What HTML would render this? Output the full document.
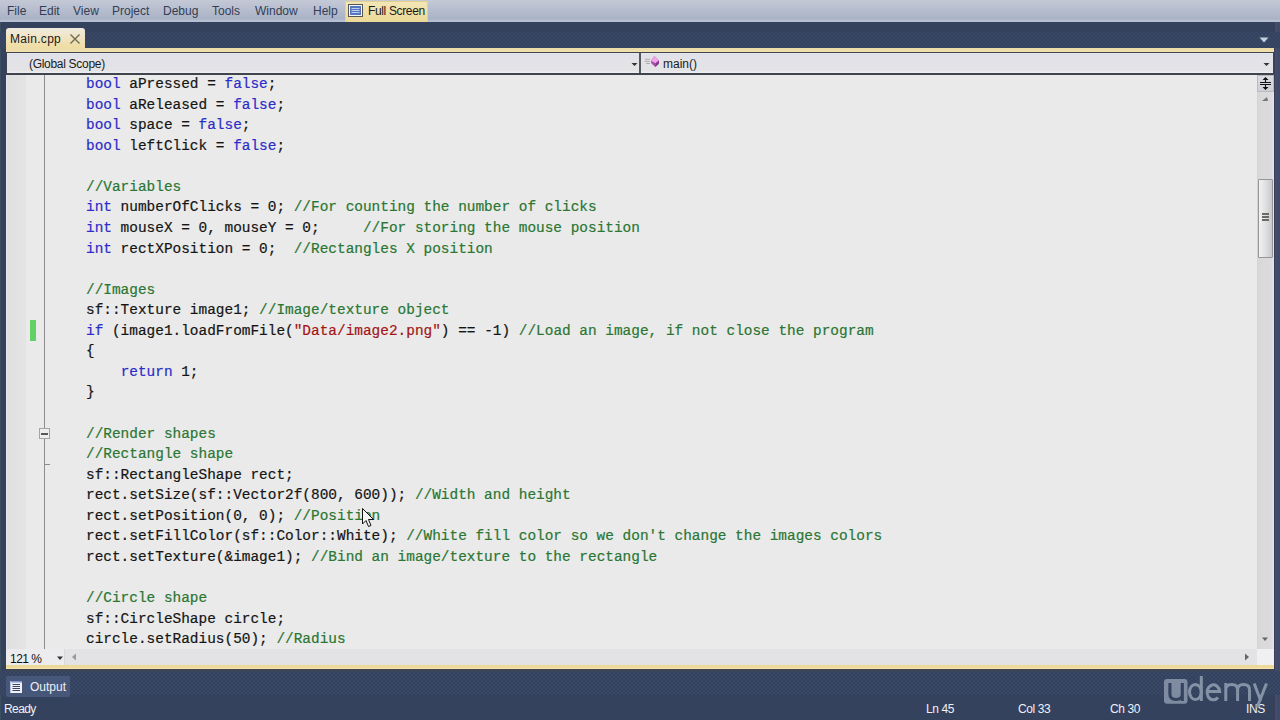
<!DOCTYPE html>
<html><head><meta charset="utf-8">
<style>
*{margin:0;padding:0;box-sizing:border-box}
html,body{width:1280px;height:720px;overflow:hidden}
body{position:relative;background:#34425e;font-family:"Liberation Sans",sans-serif;}
.abs{position:absolute}
#menubar{left:0;top:0;width:1280px;height:22px;background:linear-gradient(#c4c9d6 0,#aab2c6 19px,#b6bed2 20.5px,#b6bed2 22px);}
.mi{position:absolute;top:4px;font-size:12px;color:#323e56;line-height:14px;white-space:nowrap}
#fs{left:345px;top:1px;width:83px;height:21px;background:linear-gradient(#f3e6b6,#ecd998);border:1px solid #e6d08a;border-bottom:none}
#tabband{left:0;top:22px;width:1280px;height:30px;background:#34425e}
#tab{left:6px;top:28px;width:79px;height:20px;border-radius:3px 3px 0 0;background:linear-gradient(#f0ebdf,#efdca2)}
#yband{left:6px;top:48px;width:1268px;height:4px;background:linear-gradient(#eddca6,#efdfab)}
#frame{left:6px;top:52px;width:1268px;height:619px;background:#40444e}
#scope{left:7px;top:53px;width:1266px;height:20px;background:linear-gradient(#ebebf2 0,#e1e1e9 1px,#e4e4e6 18px,#ededf0 19px)}
#code{left:6px;top:75px;width:1251px;height:574px;background:#eaeaea;overflow:hidden}
#gut1{left:6px;top:75px;width:20px;height:574px;background:linear-gradient(90deg,#e4e8ee 0,#e4e8ee 1px,#dfe0e0 1px,#e4e4e5 20px)}
#outl{left:44px;top:75px;width:1px;height:574px;background:#8c8c8c}
pre{position:absolute;left:86px;top:74px;font-family:"Liberation Mono",monospace;font-size:14.43px;line-height:20.556px;color:#151515;white-space:pre;-webkit-text-stroke:0.2px currentColor}
.k{color:#2c2cc8}.c{color:#2a7632}.s{color:#a31515}
#vsb{left:1257px;top:75px;width:17px;height:574px;background:linear-gradient(90deg,#cfcfd0 0,#d8d8d9 1px,#dcdadd 14px,#e2e2ea 16px)}
#hsb{left:6px;top:649px;width:1268px;height:16px;background:#e3e3e5}
#yband2{left:6px;top:665px;width:1268px;height:4px;background:linear-gradient(#ecd996,#eedb9c 70%,#f5ebc2)}
.dith{position:absolute;background:#33415f;background-image:radial-gradient(#3a4966 30%,transparent 40%),radial-gradient(#3a4966 30%,transparent 40%);background-size:4px 4px;background-position:0 0,2px 2px}
.st{position:absolute;top:702px;font-size:12px;color:#eef1f6;line-height:14px;white-space:nowrap;letter-spacing:-0.4px}
</style></head><body>
<div class="abs" style="left:0;top:22px;width:1px;height:698px;background:#3a5060"></div>
<div class="abs" style="left:1274px;top:22px;width:6px;height:698px;background:linear-gradient(90deg,#3a3e58 0,#3a3e58 1px,#464c6e 1px,#444c6e 3px,#3e4a6a 4px,#3a5064 6px)"></div>
<div id="menubar" class="abs">
  <span class="mi" style="left:7px">File</span>
  <span class="mi" style="left:39px">Edit</span>
  <span class="mi" style="left:73px">View</span>
  <span class="mi" style="left:112px">Project</span>
  <span class="mi" style="left:163px">Debug</span>
  <span class="mi" style="left:212px">Tools</span>
  <span class="mi" style="left:255px">Window</span>
  <span class="mi" style="left:313px">Help</span>
</div>
<div class="dith" style="left:0;top:32px;width:1280px;height:16px"></div>
<div class="dith" style="left:0;top:671px;width:1280px;height:24px"></div>
<div id="fs" class="abs"></div>
<span class="mi" style="left:368px;color:#1a1a1a;letter-spacing:-0.35px">Full Screen</span>
<div id="tab" class="abs"></div>
<span class="abs" style="left:10px;top:32px;font-size:12px;line-height:14px;color:#1a1a1a;letter-spacing:0.3px">Main.cpp</span>
<div id="yband" class="abs"></div>
<div id="frame" class="abs"></div>
<div id="scope" class="abs"></div>
<span class="abs" style="left:29px;top:57px;font-size:12px;line-height:14px;color:#1a1a1a;letter-spacing:-0.3px">(Global Scope)</span>
<span class="abs" style="left:663px;top:57px;font-size:12px;line-height:14px;color:#1a1a1a">main()</span>
<div id="code" class="abs"></div>
<div id="gut1" class="abs"></div>
<div id="outl" class="abs"></div>
<pre><span class="k">bool</span> aPressed = <span class="k">false</span>;
<span class="k">bool</span> aReleased = <span class="k">false</span>;
<span class="k">bool</span> space = <span class="k">false</span>;
<span class="k">bool</span> leftClick = <span class="k">false</span>;

<span class="c">//Variables</span>
<span class="k">int</span> numberOfClicks = 0; <span class="c">//For counting the number of clicks</span>
<span class="k">int</span> mouseX = 0, mouseY = 0;     <span class="c">//For storing the mouse position</span>
<span class="k">int</span> rectXPosition = 0;  <span class="c">//Rectangles X position</span>

<span class="c">//Images</span>
sf::Texture image1; <span class="c">//Image/texture object</span>
<span class="k">if</span> (image1.loadFromFile(<span class="s">"Data/image2.png"</span>) == -1) <span class="c">//Load an image, if not close the program</span>
{
    <span class="k">return</span> 1;
}

<span class="c">//Render shapes</span>
<span class="c">//Rectangle shape</span>
sf::RectangleShape rect;
rect.setSize(sf::Vector2f(800, 600)); <span class="c">//Width and height</span>
rect.setPosition(0, 0); <span class="c">//Position</span>
rect.setFillColor(sf::Color::White); <span class="c">//White fill color so we don't change the images colors</span>
rect.setTexture(&amp;image1); <span class="c">//Bind an image/texture to the rectangle</span>

<span class="c">//Circle shape</span>
sf::CircleShape circle;
circle.setRadius(50); <span class="c">//Radius</span>
</pre>
<div id="vsb" class="abs"></div>
<!-- split button -->
<div class="abs" style="left:1257px;top:75px;width:17px;height:17px;background:linear-gradient(#dcdde2,#cfd1d6);border:1px solid #b8bac0"></div>
<svg class="abs" style="left:1257px;top:75px" width="17" height="17" viewBox="0 0 17 17">
 <path d="M3 7.5H14M3 9.5H14" stroke="#111" stroke-width="1.1"/>
 <path d="M8.5 2L5.5 5H11.5Z M8.5 15L5.5 12H11.5Z" fill="#111"/>
 <path d="M8.5 4V7M8.5 10V13" stroke="#111" stroke-width="1.1"/>
</svg>
<svg class="abs" style="left:1261px;top:96px" width="8" height="6" viewBox="0 0 8 6"><path d="M1 5H7L6 1Z" fill="#777"/></svg>
<!-- thumb -->
<div class="abs" style="left:1258px;top:179px;width:15px;height:79px;border:1px solid #959595;border-radius:1px;background:linear-gradient(90deg,#f2f2f3,#e0e0e2 50%,#c9c9cc)"></div>
<div class="abs" style="left:1262px;top:213px;width:7px;height:2px;background:#6a6a6a"></div>
<div class="abs" style="left:1262px;top:216px;width:7px;height:2px;background:#6a6a6a"></div>
<div class="abs" style="left:1262px;top:219px;width:7px;height:2px;background:#6a6a6a"></div>
<svg class="abs" style="left:1261px;top:637px" width="8" height="6" viewBox="0 0 8 6"><path d="M1 0.5H7L4 4Z" fill="#666"/></svg>

<div id="hsb" class="abs"></div>
<div class="abs" style="left:6px;top:649px;width:59px;height:16px;background:#ececee;border-right:1px solid #d8d8da"></div>
<span class="abs" style="left:10px;top:652px;font-size:12px;line-height:14px;color:#111;letter-spacing:-0.5px">121 %</span>
<svg class="abs" style="left:57px;top:656px" width="7" height="5" viewBox="0 0 7 5"><path d="M0 0.5H6L3 4Z" fill="#333"/></svg>
<svg class="abs" style="left:71px;top:653px" width="6" height="8" viewBox="0 0 6 8"><path d="M5 0.5V7.5L1 4Z" fill="#999"/></svg>
<svg class="abs" style="left:1244px;top:653px" width="6" height="8" viewBox="0 0 6 8"><path d="M1 0.5V7.5L5 4Z" fill="#666"/></svg>
<div class="abs" style="left:1257px;top:649px;width:17px;height:16px;background:#f0eff2"></div>
<div id="yband2" class="abs"></div>
<!-- output tab -->
<div class="abs" style="left:6px;top:676px;width:64px;height:21px;border-radius:2px;background:#46577a"></div>
<svg class="abs" style="left:10px;top:681px" width="13" height="12" viewBox="0 0 13 12">
 <rect x="0" y="0" width="12" height="12" fill="#eef1fa"/>
 <rect x="0" y="0" width="12" height="1.5" fill="#7f8fd0"/>
 <rect x="0" y="0" width="1" height="12" fill="#b8c2e6"/>
 <rect x="2.5" y="3" width="7.5" height="1" fill="#3a4460"/>
 <rect x="2.5" y="5" width="7.5" height="1" fill="#3a4460"/>
 <rect x="2.5" y="7" width="7.5" height="1" fill="#3a4460"/>
 <rect x="2.5" y="9" width="7.5" height="1" fill="#3a4460"/>
</svg>
<span class="abs" style="left:30px;top:680px;font-size:12px;line-height:14px;color:#eef0f6">Output</span>


<!-- tab close -->
<svg class="abs" style="left:69px;top:33px" width="12" height="12" viewBox="0 0 12 12"><path d="M1.5 1.5L10.5 10.5M10.5 1.5L1.5 10.5" stroke="#6f6a55" stroke-width="1.4"/></svg>
<!-- tab dropdown arrow -->
<svg class="abs" style="left:1259px;top:37px" width="10" height="6" viewBox="0 0 10 6"><path d="M0.5 0.5H9.5L5 5.5Z" fill="#c8d0e0"/></svg>
<!-- scope divider -->
<div class="abs" style="left:639px;top:53px;width:2px;height:20px;background:#55585f"></div>
<svg class="abs" style="left:631px;top:62px" width="7" height="5" viewBox="0 0 7 5"><path d="M0.5 1H6.5L3.5 4Z" fill="#333"/></svg>
<svg class="abs" style="left:1263px;top:62px" width="7" height="5" viewBox="0 0 7 5"><path d="M0.5 1H6.5L3.5 4Z" fill="#333"/></svg>
<!-- main icon -->
<svg class="abs" style="left:640px;top:52px" width="22" height="22" viewBox="640 52 22 22">
 <path d="M645 59.3H650M644.5 61.4H650M646 63.5H650" stroke="#a8a8a8" stroke-width="0.9"/>
 <path d="M654.4 56L659 60.5L658.8 63.8L655.3 67L651.2 63.2L651 60.8Z" fill="#a454a4"/>
 <path d="M654.4 56L659 60.5L655.6 63.2L651 60.8Z" fill="#f0a2ea"/>
 <path d="M655.6 63.2L659 60.5L658.8 63.8L655.3 67Z" fill="#84388a"/>
</svg>
<!-- green change bar -->
<div class="abs" style="left:29.5px;top:320px;width:6.5px;height:21px;background:#62d064"></div>
<!-- collapse box -->
<div class="abs" style="left:39px;top:428px;width:11px;height:11px;border:1px solid #a4a4a4;background:#eeeeee"></div>
<div class="abs" style="left:41px;top:433px;width:7px;height:1.5px;background:#585858"></div>
<div class="abs" style="left:45px;top:464px;width:5px;height:1px;background:#8c8c8c"></div>
<span class="st" style="left:4px;letter-spacing:-0.6px">Ready</span>
<span class="st" style="left:926px">Ln 45</span>
<span class="st" style="left:1018px">Col 33</span>
<span class="st" style="left:1110px">Ch 30</span>
<span class="st" style="left:1246px">INS</span>
<!-- full screen icon -->
<svg class="abs" style="left:348px;top:4px" width="16" height="14" viewBox="0 0 16 14">
 <rect x="0.5" y="0.5" width="14" height="12" fill="#f4f6fb" stroke="#555"/>
 <rect x="2" y="2" width="11" height="9" fill="#5676bd"/>
 <path d="M3.5 4.5H11.5M3.5 6.5H11.5M3.5 8.5H11.5" stroke="#c8d6f4" stroke-width="0.9"/>
</svg>
<!-- udemy -->
<svg class="abs" style="left:1150px;top:665px" width="130" height="55" viewBox="1150 665 130 55">
 <rect x="1164" y="679" width="23.5" height="24.7" rx="3" fill="#7f8ba0"/>
 <path d="M1169.9 683V694Q1169.9 699.5 1176 699.5Q1182.3 699.5 1182.3 694V683M1182.3 690V701" fill="none" stroke="#34425e" stroke-width="3.1"/>
 <g fill="none" stroke="#8592a6" stroke-width="3">
  <ellipse cx="1195.4" cy="692" rx="5.9" ry="7.5"/>
  <path d="M1201.3 676V701"/>
  <path d="M1207 691.5H1219.7A6.35 7.5 0 1 0 1218 697.5"/>
  <path d="M1225.8 683V701M1225.8 690Q1225.8 684.5 1231.7 684.5Q1237.6 684.5 1237.6 690V701M1237.6 690Q1237.6 684.5 1243.5 684.5Q1249.5 684.5 1249.5 690V701"/>
  <path d="M1254.2 683.5L1260.8 701M1266.5 683.5L1257 707.5"/>
 </g>
</svg>
<!-- cursor -->
<svg class="abs" style="left:362px;top:508px" width="13" height="20" viewBox="0 0 13 20">
 <path d="M0.5 0.5V16L4 12.5L6.5 18.5L9 17.5L6.5 11.5H11.5Z" fill="#f4f4f4" stroke="#111" stroke-width="1"/>
</svg>
</body></html>
